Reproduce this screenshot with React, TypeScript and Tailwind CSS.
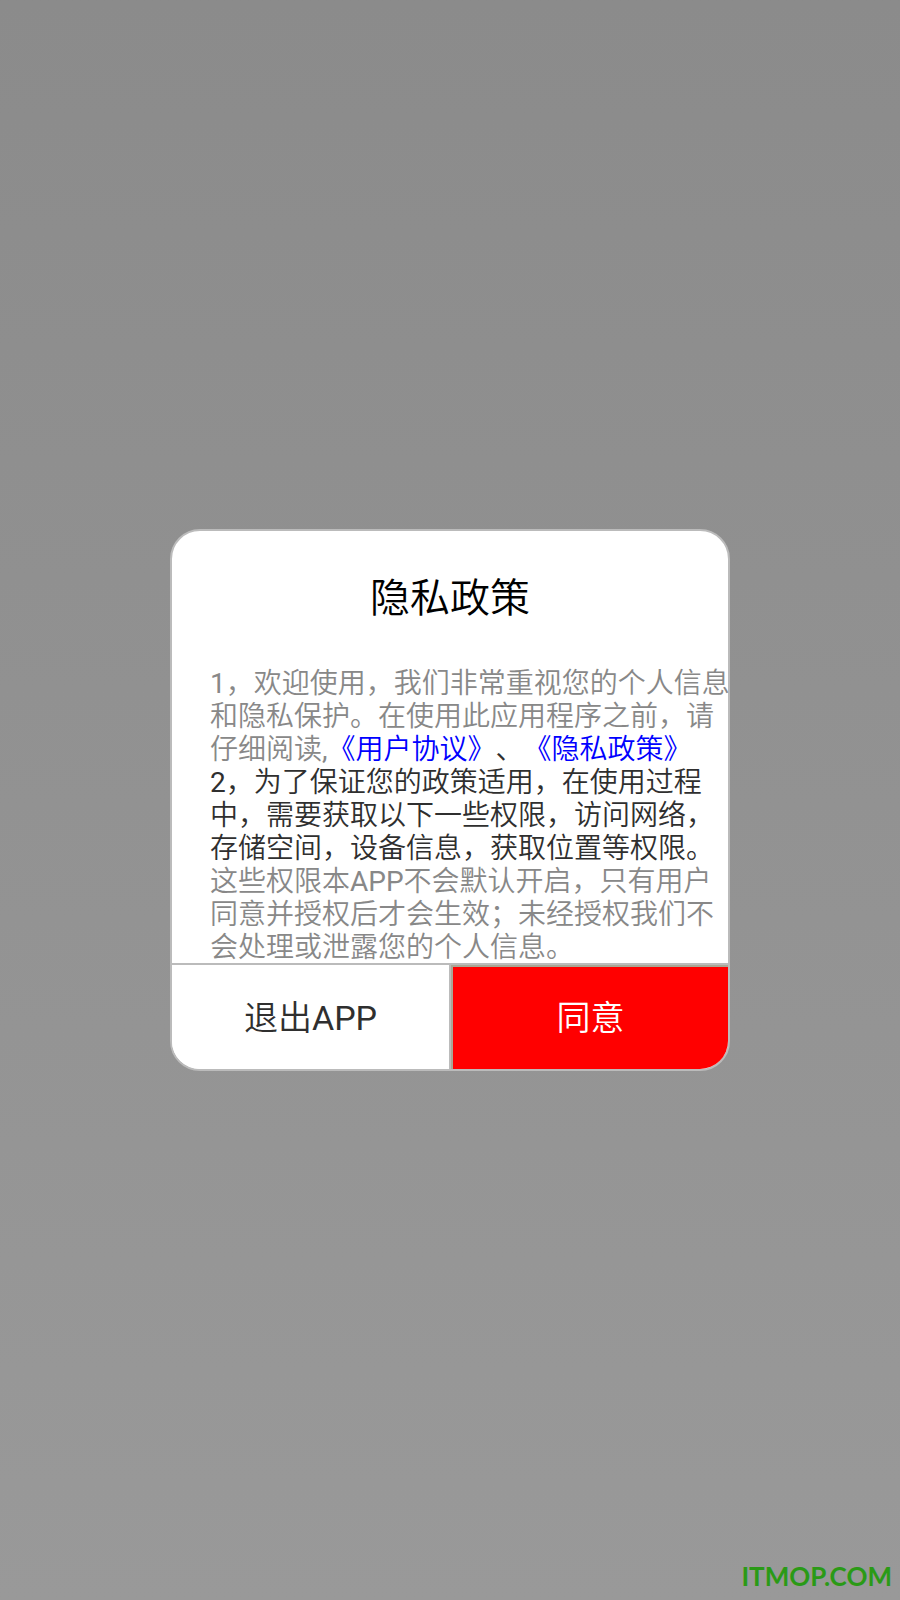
import React from 'react';

const PolicyText: React.FC = () => {
  return (
    <div className="pl-[38px] whitespace-nowrap text-[28px] leading-[33px] text-[#888888]">
      <p>
        1，欢迎使用，我们非常重视您的个人信息
        <br />
        和隐私保护。在使用此应用程序之前，请
        <br />
        仔细阅读,
        <a href="#agreement" className="text-[#0000ff]">《用户协议》</a>
        <span className="text-[#2f2f2f]">、</span>
        <a href="#privacy" className="text-[#0000ff]">《隐私政策》</a>
      </p>
      <p className="text-[#2f2f2f]">
        2，为了保证您的政策适用，在使用过程
        <br />
        中，需要获取以下一些权限，访问网络，
        <br />
        存储空间，设备信息，获取位置等权限。
      </p>
      <p>
        这些权限本APP不会默认开启，只有用户
        <br />
        同意并授权后才会生效；未经授权我们不
        <br />
        会处理或泄露您的个人信息。
      </p>
    </div>
  );
};

const App: React.FC = () => {
  return (
    <main
      lang="zh-CN"
      className="relative min-h-screen flex items-center justify-center bg-linear-to-b from-[#8b8b8b] to-[#999999] font-[Roboto,'Noto_Sans_CJK_SC_DemiLight','Noto_Sans_CJK_SC',sans-serif] [text-spacing-trim:space-all]"
    >
      <section
        role="dialog"
        aria-labelledby="policy-title"
        className="w-full max-w-[560px] rounded-[30px] border-2 border-[#bbbbbb] bg-white"
      >
        <h1 id="policy-title" className="h-[136px] text-center text-[40px] leading-[136px] font-normal text-black">
          隐私政策
        </h1>
        <PolicyText />
        <div className="grid grid-cols-[279fr_277fr] h-[106px] -mt-px border-t-2 border-[#bbbbbb] text-[34px]">
          <button type="button" className="rounded-bl-[28px] border-r-2 border-[#bbbbbb] bg-white pt-[3px] text-[#2f2f2f]">
            退出APP
          </button>
          <button type="button" className="rounded-br-[28px] border-t-2 border-l-2 border-[#aaa694] bg-[#ff0000] text-white">
            同意
          </button>
        </div>
      </section>

      <p className="absolute right-2 bottom-2 font-[Lato,sans-serif] text-[26px] leading-[32px] font-bold text-[#2a9a16]">
        ITMOP.COM
      </p>
    </main>
  );
};

export default App;
